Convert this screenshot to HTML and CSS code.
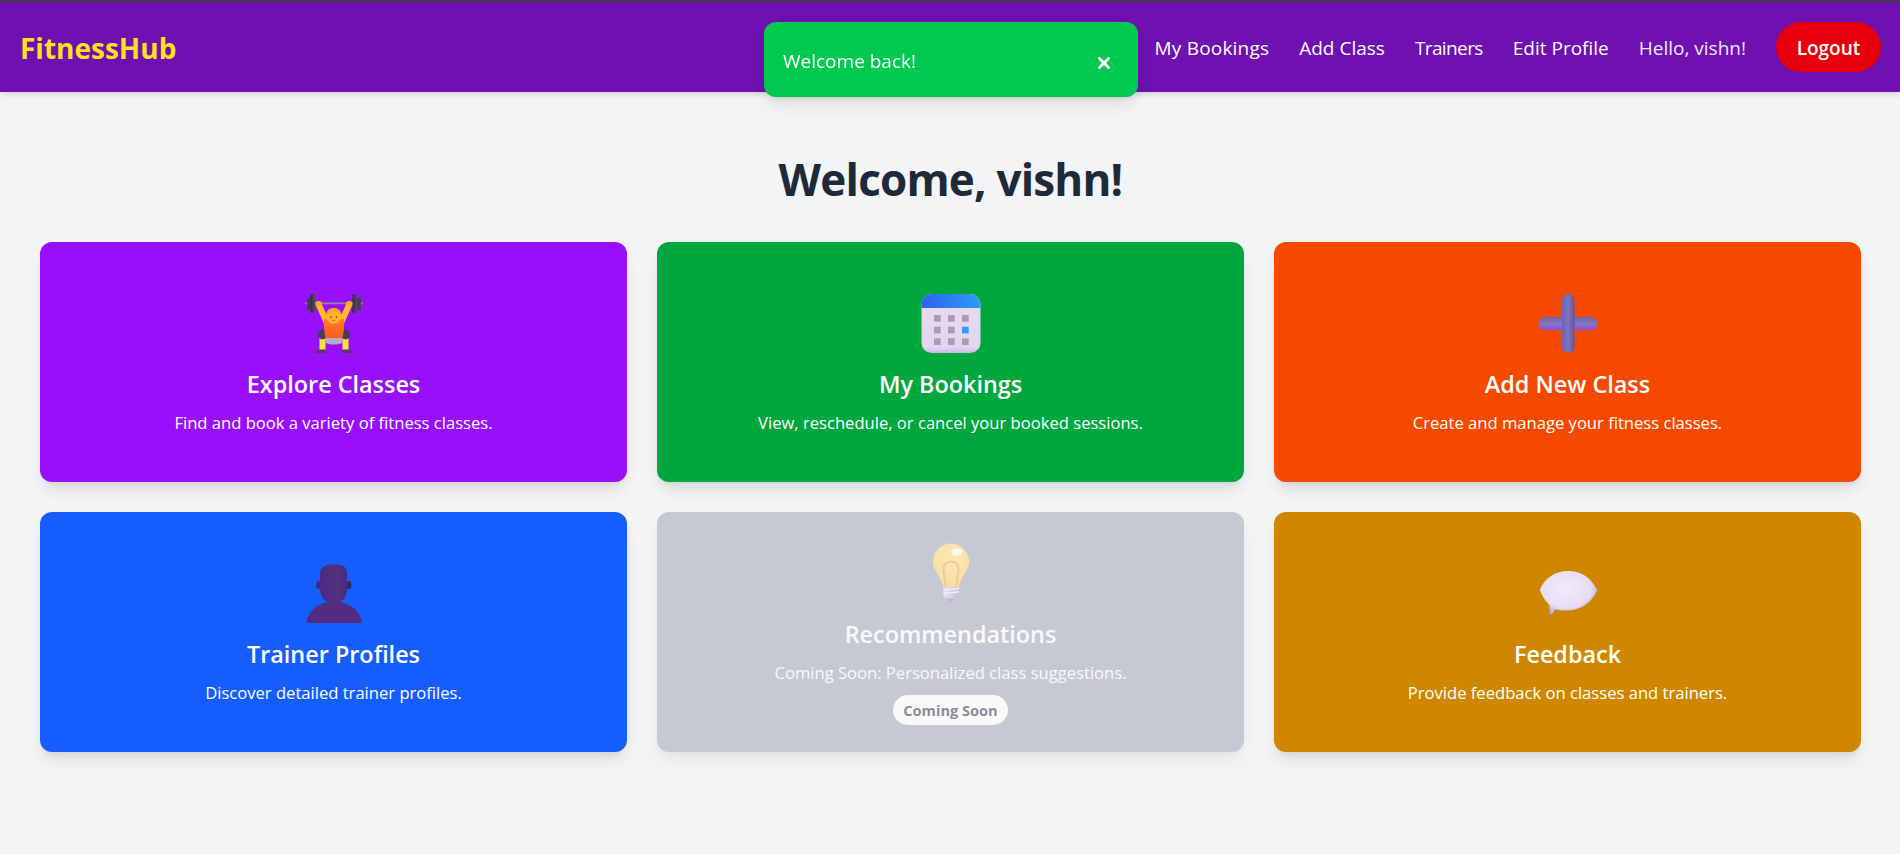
FILE: index.html
```html
<!DOCTYPE html>
<html lang="en">
<head>
<meta charset="utf-8">
<title>FitnessHub</title>
<link rel="stylesheet" href="styles.css">
</head>
<body>
<header class="topbar">
  <a class="logo">FitnessHub</a>
  <nav class="nav">
    <a class="nav-link nav-link-wide">My Bookings</a>
    <a class="nav-link">Add Class</a>
    <a class="nav-link nav-link-tight">Trainers</a>
    <a class="nav-link">Edit Profile</a>
    <span class="nav-hello">Hello, vishn!</span>
    <button class="logout">Logout</button>
  </nav>
</header>

<div class="toast">
  <span class="toast-text">Welcome back!</span>
  <svg class="toast-close" viewBox="0 0 12 12"><path d="M1.5 1.5L10.5 10.5M10.5 1.5L1.5 10.5"/></svg>
</div>

<main class="main">
  <h1 class="welcome">Welcome, vishn!</h1>
  <section class="cards">

    <article class="card card-purple">
      <div class="icon">
        <svg viewBox="0 0 60 60">
          <defs>
            <linearGradient id="plate" x1="0" y1="0" x2="1" y2="0"><stop offset="0" stop-color="#2f2a3c"/><stop offset="1" stop-color="#544c66"/></linearGradient>
            <linearGradient id="shirt" x1="0" y1="0" x2="0" y2="1"><stop offset="0" stop-color="#ff7a2a"/><stop offset="1" stop-color="#ff5a1f"/></linearGradient>
          </defs>
          <rect x="1" y="9.500" width="58" height="1.800" rx=".9" fill="#8f8aa0"/>
          <rect x="3" y="4.500" width="4" height="12.500" rx="1.500" fill="#453f55"/>
          <rect x="6.500" y="1" width="4.500" height="19" rx="1.600" fill="url(#plate)"/>
          <rect x="48.500" y="1" width="4.500" height="19" rx="1.600" fill="url(#plate)"/>
          <rect x="53" y="4.500" width="4" height="12.500" rx="1.500" fill="#453f55"/>
          <path d="M14.500 11L23 30" stroke="#fdbb2c" stroke-width="6" stroke-linecap="round" fill="none"/>
          <path d="M45.500 11L37 30" stroke="#fdbb2c" stroke-width="6" stroke-linecap="round" fill="none"/>
          <rect x="12" y="8.500" width="6" height="4" rx="1.500" fill="#f9a825"/>
          <rect x="42" y="8.500" width="6" height="4" rx="1.500" fill="#f9a825"/>
          <path d="M15.500 45L21.500 45L21.500 57L15.500 57Z" fill="#fde03a"/>
          <path d="M38.500 45L44.500 45L44.500 57L38.500 57Z" fill="#fde03a"/>
          <path d="M10.500 60C11 57.500 14 56.500 17 56.500L21.500 56.500L21.500 60Z" fill="#4a3f63"/>
          <path d="M49.500 60C49 57.500 46 56.500 43 56.500L38.500 56.500L38.500 60Z" fill="#4a3f63"/>
          <path d="M21 43L39 43L38 50C33 52 27 52 22 50Z" fill="#b7abc4"/>
          <ellipse cx="18.500" cy="41.500" rx="4.800" ry="5" fill="#4b3a63"/>
          <ellipse cx="41.500" cy="41.500" rx="4.800" ry="5" fill="#4b3a63"/>
          <path d="M20 26L40 26C40.500 33 39.500 40 38.500 45L21.500 45C20.500 40 19.500 33 20 26Z" fill="url(#shirt)"/>
          <circle cx="29.800" cy="23" r="7.800" fill="#fcb42c"/>
          <path d="M22 23C22 16 27 15 30 15C34 15 38 18 37.600 23C35.500 19.500 33 19 30 19C27 19 24 20 22 23Z" fill="#f5a51e"/>
          <circle cx="27" cy="24" r=".8" fill="#4a3626"/>
          <circle cx="32.500" cy="24" r=".8" fill="#4a3626"/>
          <path d="M28.500 27.500L31 27.500" stroke="#c4552b" stroke-width=".8"/>
        </svg>
      </div>
      <h2 class="card-title">Explore Classes</h2>
      <p class="card-text">Find and book a variety of fitness classes.</p>
    </article>

    <article class="card card-green">
      <div class="icon">
        <svg viewBox="0 0 60 60">
          <defs>
            <linearGradient id="calTop" x1="0" y1="0" x2="1" y2="0"><stop offset="0" stop-color="#2f62ee"/><stop offset="1" stop-color="#2f9df6"/></linearGradient>
            <linearGradient id="calBody" x1="0" y1="0" x2="0" y2="1"><stop offset="0" stop-color="#e6dcf2"/><stop offset=".9" stop-color="#e2d6ee"/><stop offset="1" stop-color="#cdb8ea"/></linearGradient>
          </defs>
          <rect x=".5" y="1" width="59" height="59" rx="10" fill="url(#calBody)"/>
          <path d="M.5 15L.5 11A10 10 0 0 1 10.500 1L49.500 1A10 10 0 0 1 59.500 11L59.500 15Z" fill="url(#calTop)"/>
          <g fill="#a99cb6">
            <rect x="13" y="22" width="6.700" height="6.700"/><rect x="27" y="22" width="6.700" height="6.700"/><rect x="41" y="22" width="6.700" height="6.700"/>
            <rect x="13" y="33.700" width="6.700" height="6.700"/><rect x="27" y="33.700" width="6.700" height="6.700"/>
            <rect x="13" y="45.300" width="6.700" height="6.700"/><rect x="27" y="45.300" width="6.700" height="6.700"/><rect x="41" y="45.300" width="6.700" height="6.700"/>
          </g>
          <rect x="41" y="33.700" width="6.700" height="6.700" fill="#2f9df6"/>
        </svg>
      </div>
      <h2 class="card-title">My Bookings</h2>
      <p class="card-text">View, reschedule, or cancel your booked sessions.</p>
    </article>

    <article class="card card-orange">
      <div class="icon">
        <svg viewBox="0 0 60 60">
          <defs>
            <linearGradient id="plusH" x1="0" y1="0" x2="0" y2="1"><stop offset="0" stop-color="#6d62a8"/><stop offset=".5" stop-color="#8377bf"/><stop offset="1" stop-color="#8a52e6"/></linearGradient>
            <linearGradient id="plusV" x1="0" y1="0" x2="1" y2="0"><stop offset="0" stop-color="#6f60b4"/><stop offset=".5" stop-color="#8074bd"/><stop offset="1" stop-color="#62529f"/></linearGradient>
          </defs>
          <rect x=".5" y="24" width="59" height="13" rx="6.500" fill="url(#plusH)"/>
          <rect x="24" y="1" width="12.500" height="59" rx="6.200" fill="url(#plusV)"/>
        </svg>
      </div>
      <h2 class="card-title">Add New Class</h2>
      <p class="card-text">Create and manage your fitness classes.</p>
    </article>

    <article class="card card-blue">
      <div class="icon">
        <svg viewBox="0 0 60 60">
          <defs>
            <linearGradient id="head" x1="0" y1="0" x2="1" y2="0"><stop offset="0" stop-color="#4a2a82"/><stop offset=".6" stop-color="#54307f"/><stop offset="1" stop-color="#4a2a7c"/></linearGradient>
          </defs>
          <path d="M2.500 60C4 47 16 38.500 30 38.500C44 38.500 56.500 47 58 60Z" fill="#512c80"/>
          <ellipse cx="14.500" cy="22" rx="2.300" ry="4" fill="#432873"/>
          <ellipse cx="45" cy="22" rx="2.300" ry="4" fill="#3a2266"/>
          <path d="M16 11C16 4 21 1.300 30 1.300C39 1.300 43 4 43 11L43 26C43 35 37 40.500 30 40.500C22 40.500 16 35 16 26Z" fill="url(#head)"/>
        </svg>
      </div>
      <h2 class="card-title">Trainer Profiles</h2>
      <p class="card-text">Discover detailed trainer profiles.</p>
    </article>

    <article class="card card-gray">
      <div class="icon">
        <svg viewBox="0 0 60 60">
          <defs>
            <radialGradient id="bulb" cx=".5" cy=".35" r=".7"><stop offset="0" stop-color="#ffe070"/><stop offset="1" stop-color="#ffc94a"/></radialGradient>
            <linearGradient id="base" x1="0" y1="0" x2="1" y2="0"><stop offset="0" stop-color="#d9d2ea"/><stop offset="1" stop-color="#9d90c8"/></linearGradient>
          </defs>
          <path d="M30 .500C40 .500 48 8.500 48 18.500C48 29 39.500 33 38 44L22 44C20.500 33 12 29 12 18.500C12 8.500 20 .500 30 .500Z" fill="url(#bulb)"/>
          <path d="M24.500 44C24.500 37 22.500 31 22.500 26C22.500 21.500 26 18.500 30 18.500C34 18.500 37.500 21.500 37.500 26C37.500 31 35.500 37 35.500 44" fill="none" stroke="#f2a04a" stroke-width="2"/>
          <ellipse cx="36" cy="9" rx="5.500" ry="3.800" fill="#fff" opacity=".85"/>
          <path d="M22.500 44L38 44L38 52C38 54 35 55 33.500 55C33 57 27 57 26.500 55C25 55 22.500 54 22.500 52Z" fill="url(#base)"/>
          <path d="M22.500 47L38 45.500M22.500 50.500L38 49" stroke="#f1edf8" stroke-width="1.300"/>
          <path d="M26 55.500L34 55.500L32 58L28 58Z" fill="#8a6fc9"/>
        </svg>
      </div>
      <h2 class="card-title">Recommendations</h2>
      <p class="card-text">Coming Soon: Personalized class suggestions.</p>
      <span class="badge">Coming Soon</span>
    </article>

    <article class="card card-amber">
      <div class="icon">
        <svg viewBox="0 0 60 60">
          <defs>
            <radialGradient id="bubble" cx=".45" cy=".4" r=".62"><stop offset="0" stop-color="#f1ebf9"/><stop offset=".7" stop-color="#e7def5"/><stop offset="1" stop-color="#b6a6e6"/></radialGradient>
          </defs>
          <path d="M30 8C40 8 52 12 59.200 27C54 40 42 47.500 28 47.500C24 47.500 20 47 17 46.500C15.500 49 14 52 12.500 52C11.500 50 11.800 45.500 11.500 42C7 38 4 32 1.800 27C6 15 18 8 30 8Z" fill="url(#bubble)"/>
        </svg>
      </div>
      <h2 class="card-title">Feedback</h2>
      <p class="card-text">Provide feedback on classes and trainers.</p>
    </article>

  </section>
</main>
</body>
</html>
```

FILE: styles.css
```css
* { box-sizing: border-box; }

html, body { margin: 0; padding: 0; }

body {
  height: 854px;
  overflow: hidden;
  background: #f3f4f6;
  color: #1e2939;
  font-family: "Open Sans", "Noto Sans", sans-serif;
}

.topbar {
  display: flex;
  align-items: center;
  justify-content: space-between;
  height: 92px;
  padding: 0 19px 0 20px;
  border-top: 2px solid #3f3a4d;
  background: #6e11b0;
  box-shadow: 0 4px 6px -1px rgba(0,0,0,.1), 0 2px 4px -2px rgba(0,0,0,.1);
}

.logo {
  padding-top: 2px;
  color: #ffdf20;
  font-size: 28px;
  font-weight: 700;
}

.nav {
  display: flex;
  align-items: center;
  gap: 30px;
}

.nav-link {
  padding-top: 2px;
  color: #fff;
  font-size: 19px;
}

.nav-link-wide { letter-spacing: .2px; }
.nav-link-tight { letter-spacing: -.6px; }

.nav-hello {
  padding-top: 2px;
  color: #f3e8ff;
  font-size: 19px;
}

.logout {
  width: 105px;
  height: 50px;
  padding: 2px 0 0;
  border: 0;
  border-radius: 25px;
  background: #e7000b;
  color: #fff;
  font-family: inherit;
  font-size: 19px;
  font-weight: 600;
}

.toast {
  position: fixed;
  top: 22px;
  left: 50%;
  display: flex;
  align-items: center;
  justify-content: space-between;
  width: 374px;
  height: 75px;
  margin-left: -186px;
  padding: 0 28px 0 19px;
  border-radius: 12px;
  background: #00c950;
  color: #fff;
  box-shadow: 0 10px 15px -3px rgba(0,0,0,.1), 0 4px 6px -4px rgba(0,0,0,.1);
}

.toast-text { font-size: 19px; margin-top: 2px; }

.toast-close {
  width: 12px;
  height: 12px;
  margin-top: 7px;
  fill: none;
  stroke: #fff;
  stroke-width: 3;
  stroke-linecap: round;
}

.main { padding: 64px 39px 0 40px; }

.welcome {
  margin: 0 0 38px;
  font-size: 44px;
  line-height: 47px;
  padding-bottom: 1px;
  font-weight: 700;
  letter-spacing: -0.8px;
  text-align: center;
}

.cards {
  display: grid;
  grid-template-columns: repeat(3, 1fr);
  grid-auto-rows: 240px;
  gap: 30px;
}

.card {
  display: flex;
  flex-direction: column;
  align-items: center;
  justify-content: center;
  border-radius: 12px;
  color: #fff;
  text-align: center;
  box-shadow: 0 10px 15px -3px rgba(0,0,0,.1), 0 4px 6px -4px rgba(0,0,0,.1);
}

.card-purple { background: #9810fa; }
.card-green  { background: #00a63e; }
.card-orange { background: #f54900; }
.card-blue   { background: #155dfc; }
.card-gray   { background: #99a1af; opacity: .5; }
.card-amber  { background: #d08700; }

.icon {
  height: 63px;
  padding-top: 3px;
  margin-bottom: 15px;
}

.icon svg {
  display: block;
  width: 60px;
  height: 60px;
}

.card-title {
  margin: 0 0 11px;
  font-size: 23.4px;
  line-height: 32px;
  font-weight: 600;
}

.card-text {
  margin: 0;
  font-size: 16.6px;
  line-height: 24px;
}

.badge {
  width: 115px;
  height: 30px;
  margin-top: 10px;
  border-radius: 15px;
  background: #fff;
  color: #1e2939;
  font-size: 14.6px;
  font-weight: 700;
  line-height: 30px;
}
```
